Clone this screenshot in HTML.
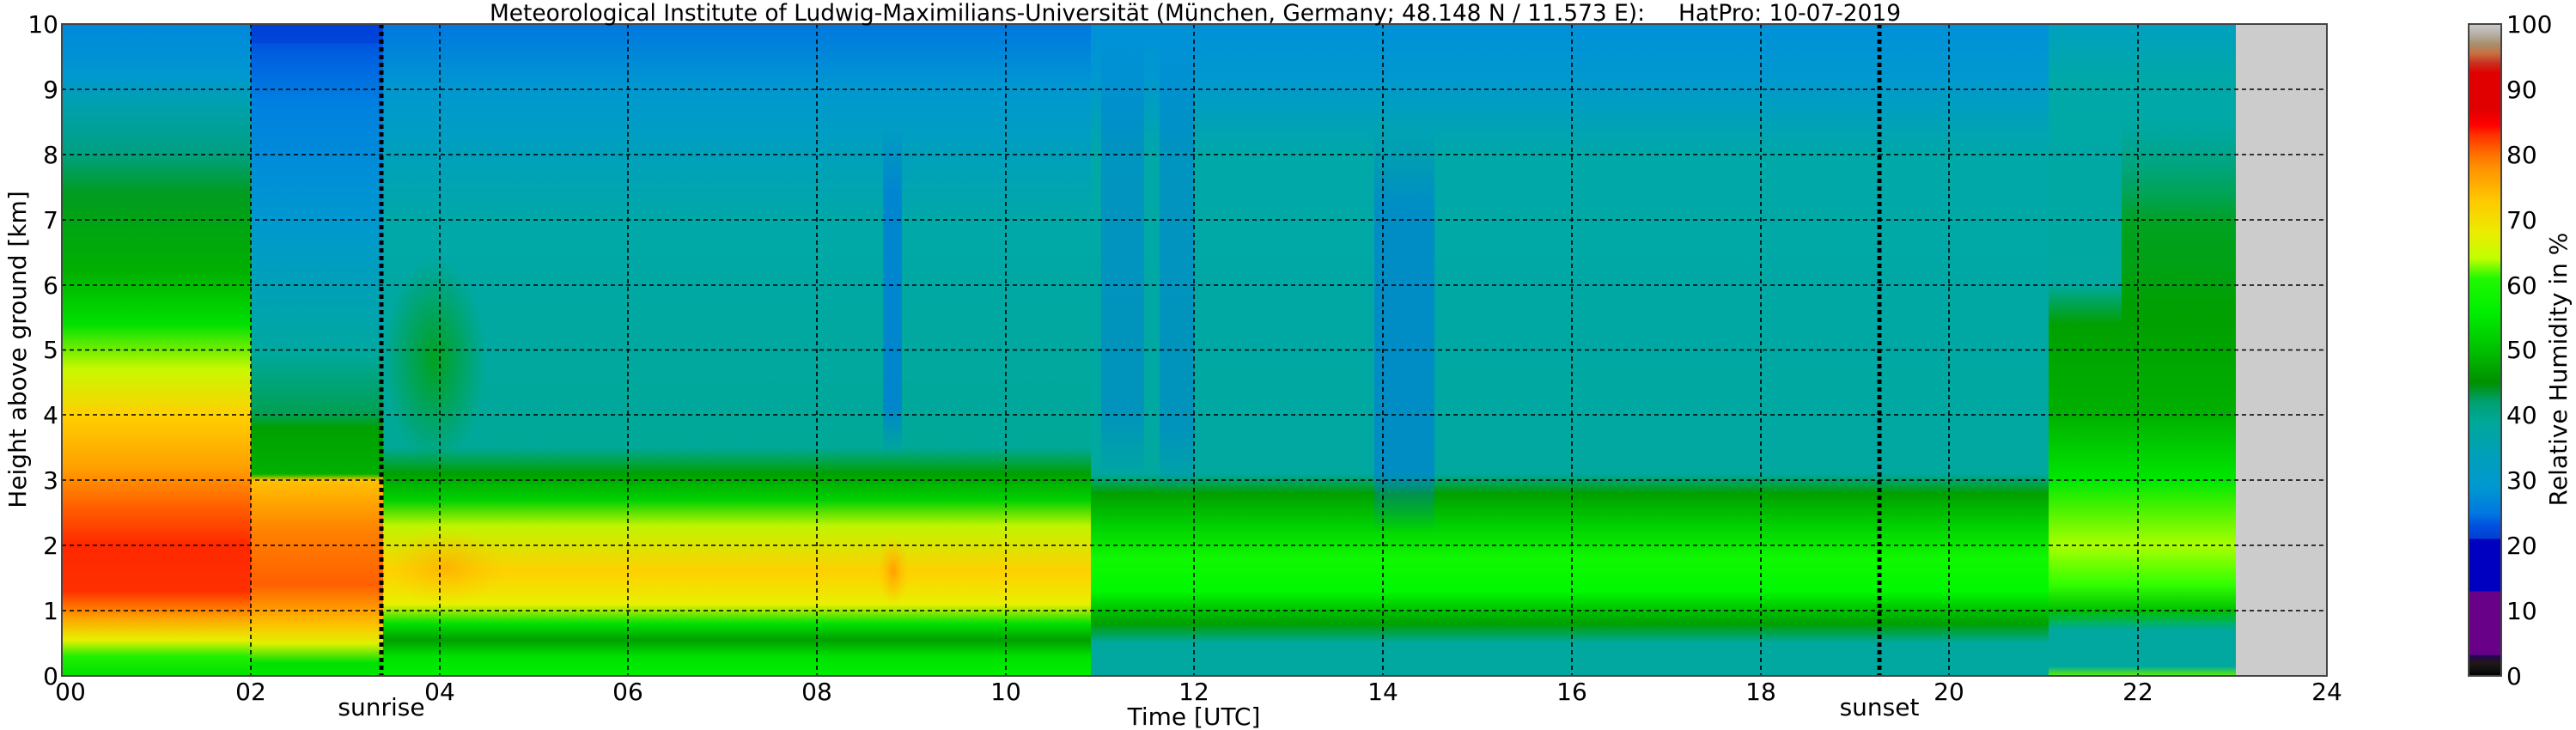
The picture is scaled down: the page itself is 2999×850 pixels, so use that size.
<!DOCTYPE html>
<html><head><meta charset="utf-8"><style>
html,body{margin:0;padding:0;background:#fff;}
svg{display:block;}
text{font-family:"DejaVu Sans","Liberation Sans",sans-serif;fill:#000;}
</style></head><body>
<svg width="2999" height="850" viewBox="0 0 2999 850" xmlns="http://www.w3.org/2000/svg">
<defs>
<clipPath id="plot"><rect x="72" y="28" width="2637" height="759"/></clipPath>
<linearGradient id="g1" gradientUnits="userSpaceOnUse" x1="0" y1="28" x2="0" y2="787">
<stop offset="0" stop-color="#0088dc"/><stop offset="0.08" stop-color="#0098d0"/><stop offset="0.12" stop-color="#00a0b0"/>
<stop offset="0.2" stop-color="#00a080"/><stop offset="0.26" stop-color="#009c20"/><stop offset="0.38" stop-color="#00b000"/>
<stop offset="0.46" stop-color="#00e000"/><stop offset="0.53" stop-color="#c8f800"/><stop offset="0.6" stop-color="#ffd000"/>
<stop offset="0.68" stop-color="#ffa000"/><stop offset="0.74" stop-color="#ff6000"/><stop offset="0.8" stop-color="#ff2800"/>
<stop offset="0.87" stop-color="#ff3000"/><stop offset="0.91" stop-color="#ffa000"/><stop offset="0.945" stop-color="#e8f000"/>
<stop offset="0.97" stop-color="#20f000"/><stop offset="1" stop-color="#00e000"/>
</linearGradient>
<linearGradient id="g2" gradientUnits="userSpaceOnUse" x1="0" y1="28" x2="0" y2="787">
<stop offset="0" stop-color="#0040d8"/><stop offset="0.05" stop-color="#0060e0"/><stop offset="0.12" stop-color="#0080e0"/>
<stop offset="0.3" stop-color="#0098d0"/><stop offset="0.5" stop-color="#00a8a0"/><stop offset="0.6" stop-color="#00a050"/>
<stop offset="0.62" stop-color="#00a000"/><stop offset="0.69" stop-color="#00b000"/><stop offset="0.7" stop-color="#ffc000"/>
<stop offset="0.78" stop-color="#ff8000"/><stop offset="0.86" stop-color="#ff6000"/><stop offset="0.92" stop-color="#ffc000"/>
<stop offset="0.95" stop-color="#e0f000"/><stop offset="0.98" stop-color="#00e000"/><stop offset="1" stop-color="#00e800"/>
</linearGradient>
<linearGradient id="g3" gradientUnits="userSpaceOnUse" x1="0" y1="28" x2="0" y2="787">
<stop offset="0" stop-color="#0078e0"/><stop offset="0.1" stop-color="#0098d0"/><stop offset="0.3" stop-color="#00a8a8"/>
<stop offset="0.65" stop-color="#00a898"/><stop offset="0.69" stop-color="#00a000"/><stop offset="0.73" stop-color="#00d000"/>
<stop offset="0.77" stop-color="#c0f400"/><stop offset="0.84" stop-color="#ffd000"/><stop offset="0.89" stop-color="#e8f000"/>
<stop offset="0.92" stop-color="#00e000"/><stop offset="0.945" stop-color="#00a000"/><stop offset="0.97" stop-color="#00e000"/><stop offset="1" stop-color="#00f000"/>
</linearGradient>
<linearGradient id="g4" gradientUnits="userSpaceOnUse" x1="0" y1="28" x2="0" y2="787">
<stop offset="0" stop-color="#0090d8"/><stop offset="0.08" stop-color="#0098d0"/><stop offset="0.2" stop-color="#00a8a8"/>
<stop offset="0.69" stop-color="#00a8a0"/><stop offset="0.72" stop-color="#00a000"/><stop offset="0.77" stop-color="#00d000"/>
<stop offset="0.82" stop-color="#10f800"/><stop offset="0.87" stop-color="#00f800"/><stop offset="0.9" stop-color="#00c000"/>
<stop offset="0.92" stop-color="#00a000"/><stop offset="0.95" stop-color="#00a8a0"/><stop offset="1" stop-color="#00a8a0"/>
</linearGradient>
<linearGradient id="g5" gradientUnits="userSpaceOnUse" x1="0" y1="28" x2="0" y2="787">
<stop offset="0" stop-color="#00a0c0"/><stop offset="0.08" stop-color="#00a8a8"/><stop offset="0.4" stop-color="#00a8a0"/>
<stop offset="0.46" stop-color="#00a000"/><stop offset="0.6" stop-color="#00b000"/><stop offset="0.7" stop-color="#00e800"/>
<stop offset="0.8" stop-color="#a8ff00"/><stop offset="0.86" stop-color="#30ff00"/><stop offset="0.9" stop-color="#00c000"/>
<stop offset="0.93" stop-color="#00a8a0"/><stop offset="0.985" stop-color="#00a8a0"/><stop offset="1" stop-color="#60f000"/>
</linearGradient>
<linearGradient id="g5top" x1="0" y1="0" x2="0" y2="1">
<stop offset="0" stop-color="#00a060" stop-opacity="0"/><stop offset="0.5" stop-color="#00a000" stop-opacity="0.8"/><stop offset="1" stop-color="#00a000" stop-opacity="1"/>
</linearGradient>
<linearGradient id="cb" gradientUnits="userSpaceOnUse" x1="0" y1="28" x2="0" y2="787">
<stop offset="0" stop-color="#cccccc"/><stop offset="0.015" stop-color="#b8b0a8"/><stop offset="0.03" stop-color="#a89070"/>
<stop offset="0.045" stop-color="#c87040"/><stop offset="0.06" stop-color="#c83020"/><stop offset="0.075" stop-color="#e00000"/>
<stop offset="0.13" stop-color="#e00000"/><stop offset="0.155" stop-color="#ff0000"/><stop offset="0.17" stop-color="#ff3000"/>
<stop offset="0.2" stop-color="#ff7000"/><stop offset="0.22" stop-color="#ff9000"/><stop offset="0.27" stop-color="#ffc800"/>
<stop offset="0.32" stop-color="#ecec00"/><stop offset="0.36" stop-color="#c0ff00"/><stop offset="0.39" stop-color="#20f800"/>
<stop offset="0.44" stop-color="#00f000"/><stop offset="0.5" stop-color="#00c000"/><stop offset="0.55" stop-color="#009000"/>
<stop offset="0.58" stop-color="#00a070"/><stop offset="0.61" stop-color="#00a898"/><stop offset="0.66" stop-color="#00a0b8"/>
<stop offset="0.71" stop-color="#0098d0"/><stop offset="0.75" stop-color="#0078e0"/><stop offset="0.77" stop-color="#0050e0"/>
<stop offset="0.79" stop-color="#0040d0"/><stop offset="0.79" stop-color="#0000c0"/><stop offset="0.87" stop-color="#0000c0"/>
<stop offset="0.87" stop-color="#680088"/><stop offset="0.968" stop-color="#680088"/><stop offset="0.968" stop-color="#280060"/>
<stop offset="0.98" stop-color="#201818"/><stop offset="0.99" stop-color="#101010"/><stop offset="1" stop-color="#000"/>
</linearGradient>
<linearGradient id="blue" x1="0" y1="0" x2="0" y2="1">
<stop offset="0" stop-color="#0070e0" stop-opacity="0"/><stop offset="0.2" stop-color="#0078e0" stop-opacity="0.7"/>
<stop offset="0.85" stop-color="#0078e0" stop-opacity="0.7"/><stop offset="1" stop-color="#0078e0" stop-opacity="0"/>
</linearGradient>
<radialGradient id="orange"><stop offset="0" stop-color="#ffa000"/><stop offset="1" stop-color="#ffc000" stop-opacity="0"/></radialGradient>
<radialGradient id="grn"><stop offset="0" stop-color="#00a000"/><stop offset="1" stop-color="#00a000" stop-opacity="0"/></radialGradient>
</defs>

<g clip-path="url(#plot)">
<rect x="72" y="28" width="220" height="759" fill="url(#g1)"/>
<rect x="292" y="28" width="154" height="759" fill="url(#g2)"/>
<rect x="446" y="28" width="824" height="759" fill="url(#g3)"/>
<rect x="1270" y="28" width="1115" height="759" fill="url(#g4)"/>
<rect x="2385" y="28" width="218" height="759" fill="url(#g5)"/>
<rect x="2470" y="140" width="133" height="240" fill="url(#g5top)"/>
<rect x="2603" y="28" width="106" height="759" fill="#cccccc"/>
<ellipse cx="506" cy="420" rx="60" ry="120" fill="url(#grn)" opacity="0.8"/>
<ellipse cx="520" cy="660" rx="70" ry="45" fill="url(#orange)" opacity="0.6"/>
<rect x="1028" y="150" width="22" height="380" fill="url(#blue)"/>
<rect x="1282" y="40" width="50" height="520" fill="url(#blue)" opacity="0.6"/>
<rect x="1350" y="40" width="40" height="540" fill="url(#blue)" opacity="0.6"/>
<rect x="1600" y="150" width="70" height="470" fill="url(#blue)" opacity="0.8"/>
<ellipse cx="1040" cy="665" rx="18" ry="40" fill="url(#orange)"/>
<rect x="292" y="28" width="154" height="22" fill="#0040d8" opacity="0.7"/>
</g>

<g stroke="#000" stroke-width="1.6" stroke-dasharray="5,4" fill="none">
<path d="M72 104H2709M72 180H2709M72 256H2709M72 332H2709M72 407.5H2709M72 483H2709M72 559H2709M72 635H2709M72 711H2709"/>
<path d="M292 28V787M512 28V787M731 28V787M951 28V787M1171 28V787M1390 28V787M1610 28V787M1830 28V787M2050 28V787M2269 28V787M2489 28V787"/>
</g>
<g stroke="#000" stroke-width="5" stroke-dasharray="5,4">
<path d="M444 28V787M2188 28V787"/>
</g>
<rect x="72" y="28" width="2637" height="759" fill="none" stroke="#444" stroke-width="2"/>

<g font-size="28" text-anchor="middle">
<text x="82" y="815">00</text><text x="292" y="815">02</text><text x="512" y="815">04</text><text x="731" y="815">06</text>
<text x="951" y="815">08</text><text x="1171" y="815">10</text><text x="1390" y="815">12</text><text x="1610" y="815">14</text>
<text x="1830" y="815">16</text><text x="2050" y="815">18</text><text x="2269" y="815">20</text><text x="2489" y="815">22</text><text x="2709" y="815">24</text>
<text x="444" y="833">sunrise</text><text x="2188" y="833">sunset</text>
<text x="1390" y="844">Time [UTC]</text>
</g>
<g font-size="28" text-anchor="end">
<text x="68" y="797">0</text><text x="68" y="721">1</text><text x="68" y="645">2</text><text x="68" y="569">3</text>
<text x="68" y="493">4</text><text x="68" y="417">5</text><text x="68" y="342">6</text><text x="68" y="266">7</text>
<text x="68" y="190">8</text><text x="68" y="114">9</text><text x="68" y="38">10</text>
</g>
<text transform="translate(30,407) rotate(-90)" font-size="28" text-anchor="middle">Height above ground [km]</text>
<text x="570" y="24" font-size="27" textLength="1345" lengthAdjust="spacingAndGlyphs">Meteorological Institute of Ludwig-Maximilians-Universität (München, Germany; 48.148 N / 11.573 E):</text>
<text x="1954" y="24" font-size="27" textLength="259" lengthAdjust="spacingAndGlyphs">HatPro: 10-07-2019</text>

<rect x="2874" y="28" width="38" height="759" fill="url(#cb)" stroke="#444" stroke-width="2"/>
<g font-size="28">
<text x="2918" y="797">0</text><text x="2918" y="721">10</text><text x="2918" y="645">20</text><text x="2918" y="569">30</text>
<text x="2918" y="493">40</text><text x="2918" y="417">50</text><text x="2918" y="342">60</text><text x="2918" y="266">70</text>
<text x="2918" y="190">80</text><text x="2918" y="114">90</text><text x="2918" y="38">100</text>
</g>
<text transform="translate(2988,430) rotate(-90)" font-size="28" text-anchor="middle">Relative Humidity in %</text>
</svg>
</body></html>
